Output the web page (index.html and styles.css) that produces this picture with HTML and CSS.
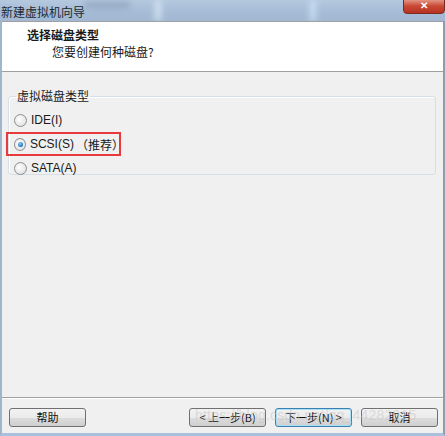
FILE: index.html
```html
<!DOCTYPE html>
<html lang="zh-CN">
<head>
  <meta charset="UTF-8" />
  <title>新建虚拟机向导</title>
  <link rel="stylesheet" href="styles.css">
</head>
<body>
  <div class="window">
    <div class="titlebar">
      <span class="title">新建虚拟机向导</span>
      <span class="blur blur-a"></span>
      <span class="blur blur-b"></span>
      <span class="blur blur-c"></span>
      <button class="close-btn">&#x2715;</button>
    </div>
    <div class="header">
      <div class="header-title">选择磁盘类型</div>
      <div class="header-sub">您要创建何种磁盘?</div>
    </div>
    <div class="content">
      <fieldset class="group">
        <legend>虚拟磁盘类型</legend>
        <label class="radio"><span class="dot"></span>IDE(I)</label>
        <label class="radio picked"><span class="dot on"></span>SCSI(S)<span class="tag">（推荐）</span></label>
        <label class="radio"><span class="dot"></span>SATA(A)</label>
      </fieldset>
    </div>
    <div class="footer">
      <button class="btn">帮助</button>
      <div class="spacer"></div>
      <button class="btn">&lt; 上一步(B)</button>
      <button class="btn focus">下一步(N) &gt;</button>
      <button class="btn">取消</button>
      <span class="watermark">https://blog.csdn.net/qq_44282915</span>
    </div>
  </div>
</body>
</html>
```

FILE: styles.css
```css
* { box-sizing: border-box; }
body {
  margin: 0;
  background: #f0f0f0;
  font-family: "Liberation Sans", "Noto Sans CJK SC", sans-serif;
  font-size: 12px;
  color: #1a1a1a;
}
.window {
  width: 445px;
  height: 436px;
  display: flex;
  flex-direction: column;
  border-left: 2px solid #9fb5cc;
  border-right: 2px solid #8d9caf;
  border-bottom: 3px solid #a9c1dc;
  background: #f0f0f0;
}
.titlebar {
  height: 21px;
  margin: 0 -2px;
  position: relative;
  background: linear-gradient(180deg, #b4c8de 0%, #a6bcd6 60%, #a2b8d2 100%);
  overflow: hidden;
  flex-shrink: 0;
}
.title {
  position: relative;
  z-index: 1;
  display: block;
  padding: 3px 0 0 1px;
  font-family: "Noto Sans CJK SC", sans-serif;
  font-size: 12px;
  color: #202830;
}
.blur {
  position: absolute;
  top: 0;
  height: 21px;
  filter: blur(3px);
}
.blur-a { left: 85px; width: 45px; background: rgba(120, 140, 165, 0.5); top: 2px; height: 6px; }
.blur-b { left: 155px; width: 6px; background: rgba(220, 235, 250, 0.8); }
.blur-c { left: 310px; width: 6px; background: rgba(210, 230, 250, 0.8); }
.close-btn {
  position: absolute;
  right: 0;
  top: -2px;
  width: 42px;
  height: 16px;
  border: 1px solid #7a2a20;
  border-radius: 0 0 4px 4px;
  background: linear-gradient(180deg, #e8a090 0%, #c84a35 50%, #b83220 100%);
  color: #fff;
  font-size: 10px;
  font-weight: bold;
  line-height: 14px;
  padding: 0;
}
.header {
  height: 51px;
  background: #fff;
  border-top: 1px solid #a0a0a0;
  border-bottom: 1px solid #a0a0a0;
  padding: 4px 0 0 25px;
  font-family: "Noto Sans CJK SC", sans-serif;
  flex-shrink: 0;
}
.header-title {
  font-weight: bold;
  font-size: 12px;
  line-height: 17px;
}
.header-sub {
  padding-left: 25px;
  font-size: 12px;
  line-height: 17px;
}
.content {
  flex: 1;
  padding: 17px 7px 0 6px;
}
.group {
  margin: 0;
  height: 86px;
  border: 1px solid #d5dfe5;
  border-radius: 3px;
  padding: 5px 0 0 5px;
  box-shadow: inset 1px 1px 0 #fff;
}
.group legend {
  font-family: "Noto Sans CJK SC", sans-serif;
  padding: 0 1px;
  margin-left: 2px;
  line-height: 14px;
}
.radio {
  display: flex;
  align-items: center;
  height: 24px;
  width: 115px;
  margin-left: -8px;
  padding-left: 8px;
  font-size: 12px;
}
.radio.picked {
  border: 2px solid #e83a3a;
  padding-left: 6px;
}
.dot {
  width: 13px;
  height: 13px;
  border-radius: 50%;
  border: 1px solid #8e8f8f;
  background: radial-gradient(circle at 40% 40%, #fff 0%, #e4e4e4 70%, #d0d0d0 100%);
  margin-right: 4px;
  position: relative;
}
.dot.on::after {
  content: "";
  position: absolute;
  left: 3px;
  top: 3px;
  width: 5px;
  height: 5px;
  border-radius: 50%;
  background: radial-gradient(circle at 40% 35%, #8cd0f5 0%, #1e72b8 70%, #16508a 100%);
}
.tag {
  font-family: "Noto Sans CJK SC", sans-serif;
  margin-left: 2px;
}
.footer {
  position: relative;
  height: 36px;
  border-top: 1px solid #a0a0a0;
  box-shadow: inset 0 1px 0 #fff;
  display: flex;
  align-items: flex-start;
  gap: 9px;
  padding: 10px 5px 0 7px;
  flex-shrink: 0;
}
.spacer { flex: 1; }
.btn {
  width: 77px;
  height: 19px;
  padding: 0;
  border: 1px solid #707070;
  border-radius: 3px;
  background: linear-gradient(180deg, #f2f2f2 0%, #ebebeb 50%, #dddddd 51%, #cfcfcf 100%);
  font-family: "Noto Sans CJK SC", sans-serif;
  font-size: 11px;
  color: #111;
  line-height: 17px;
}
.btn.focus {
  border-color: #3c7fb1;
  box-shadow: inset 0 0 0 1px #a9e0f8;
}
.watermark {
  position: absolute;
  left: 193px;
  top: 9px;
  font-family: "Liberation Sans", sans-serif;
  font-size: 14px;
  letter-spacing: 0.2px;
  color: rgba(195, 195, 195, 0.5);
  white-space: nowrap;
  pointer-events: none;
}
```
